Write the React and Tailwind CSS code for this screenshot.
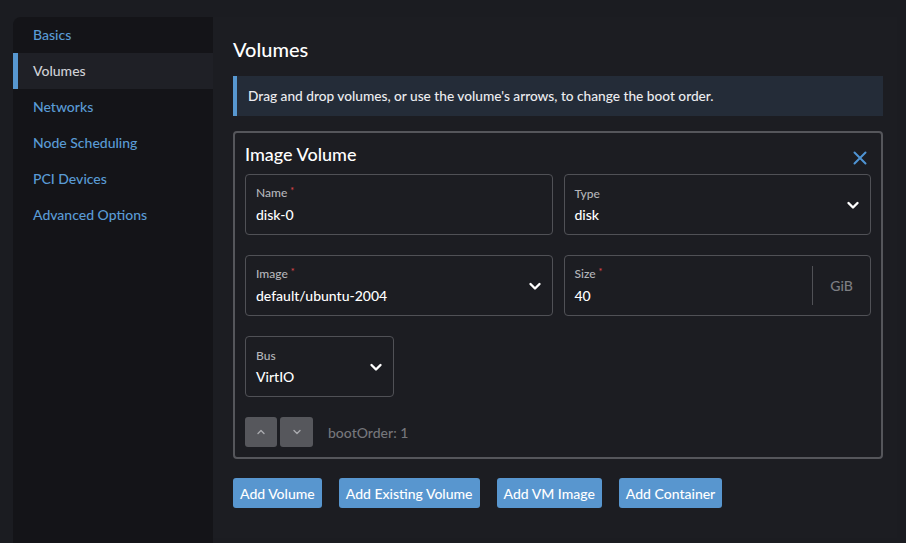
import React from 'react';

const navItems = ['Basics', 'Volumes', 'Networks', 'Node Scheduling', 'PCI Devices', 'Advanced Options'];

const Chevron = ({ className = '' }) => (
  <svg className={className} width="14" height="14" viewBox="0 0 14 14" fill="none">
    <path d="M2.5 5l4.5 4.5L11.5 5" stroke="currentColor" strokeWidth="2.4" strokeLinecap="round" strokeLinejoin="round" />
  </svg>
);

const SmallChevron = ({ up }) => (
  <svg width="10" height="10" viewBox="0 0 10 10" fill="none">
    <path d={up ? 'M2 6.5l3-3 3 3' : 'M2 3.5l3 3 3-3'} stroke="currentColor" strokeWidth="1.4" strokeLinecap="round" strokeLinejoin="round" />
  </svg>
);

const Label = ({ text, required }) => (
  <div className="text-[12px] leading-[16px] text-[#b4b5ba]">
    {text}
    {required && <span className="ml-[3px] relative -top-[3px] text-[#e0474b] text-[9px]">*</span>}
  </div>
);

const Field = ({ label, value, required, select, suffix, className = '' }) => (
  <div className={`h-[61px] border border-[#505156] rounded-[4px] flex items-center ${className}`}>
    <div className="flex-1 pl-[10px] pt-[1px]">
      <Label text={label} required={required} />
      <div className="text-[14px] leading-[20px] text-white mt-[3px]">{value}</div>
    </div>
    {select && <Chevron className="text-white mr-[10px]" />}
    {suffix && (
      <div className="flex items-center h-full py-[10px]">
        <div className="w-px h-full bg-[#505156]" />
        <div className="w-[57px] text-center text-[14px] text-[#7d7e83]">{suffix}</div>
      </div>
    )}
  </div>
);

export default function App() {
  return (
    <div
      className="w-[906px] h-[543px] bg-[#1b1c21] pt-[17px] pl-[13px] pr-[9px] overflow-hidden flex font-medium"
      style={{ fontFamily: 'Lato, "Open Sans", sans-serif' }}
    >
      <aside className="w-[200px] h-[540px] bg-[#141418] rounded-tl-[8px] flex flex-col">
        {navItems.map((item) => {
          const active = item === 'Volumes';
          return (
            <div
              key={item}
              className={`h-[36px] flex items-center text-[14px] pb-[1px] ${
                active ? 'bg-[#1f2026] text-[#cfd0d5] border-l-[5px] border-[#5797d0] pl-[15px]' : 'text-[#5a9bd5] pl-[20px]'
              }`}
            >
              {item}
            </div>
          );
        })}
      </aside>
      <main className="flex-1 h-[521px] bg-[#1c1d22] pl-[20px] pr-[14px] pt-[20px]">
        <h2 className="text-[20px] leading-[25px] text-white">Volumes</h2>
        <div className="mt-[14px] h-[40px] bg-[#242c38] border-l-[4px] border-[#5797d0] flex items-center pl-[11px] text-[13.7px] text-[#ececf0]">
          Drag and drop volumes, or use the volume&apos;s arrows, to change the boot order.
        </div>
        <div className="mt-[15px] border-2 border-[#55565b] rounded-[4px] px-[10px] pt-[9px] pb-[10px]">
          <div className="flex items-center justify-between h-[24px]">
            <h3 className="text-[18px] leading-[24px] text-white">Image Volume</h3>
            <svg className="mr-[4px] mt-[8px]" width="14" height="14" viewBox="0 0 14 14" fill="none">
              <path d="M1.5 1.5l11 11M12.5 1.5l-11 11" stroke="#4f94d4" strokeWidth="2" strokeLinecap="round" />
            </svg>
          </div>
          <div className="mt-[8px] grid grid-cols-2 gap-x-[11px] gap-y-[20px]">
            <Field label="Name" value="disk-0" required />
            <Field label="Type" value="disk" select />
            <Field label="Image" value="default/ubuntu-2004" required select />
            <Field label="Size" value="40" required suffix="GiB" />
            <Field label="Bus" value="VirtIO" select className="w-[149px]" />
          </div>
          <div className="mt-[20px] flex items-center">
            <button className="w-[32px] h-[30px] rounded-[3px] bg-[#56575c] text-[#a9aaae] flex items-center justify-center">
              <SmallChevron up />
            </button>
            <button className="ml-[3px] w-[33px] h-[30px] rounded-[3px] bg-[#56575c] text-[#a9aaae] flex items-center justify-center">
              <SmallChevron />
            </button>
            <span className="ml-[15px] text-[14px] text-[#75767b]">bootOrder: 1</span>
          </div>
        </div>
        <div className="mt-[19px] flex gap-[17px]">
          {['Add Volume', 'Add Existing Volume', 'Add VM Image', 'Add Container'].map((b) => (
            <button key={b} className="h-[30px] px-[7px] rounded-[3px] bg-[#5896cf] text-white text-[14px]">
              {b}
            </button>
          ))}
        </div>
      </main>
    </div>
  );
}
